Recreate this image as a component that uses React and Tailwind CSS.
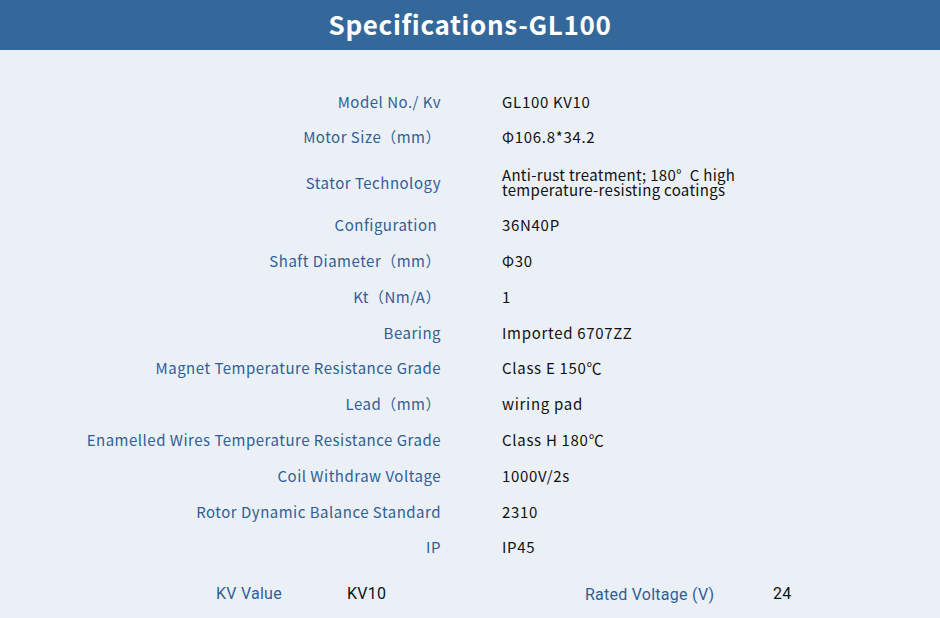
import React from "react";

const specs = [
  { label: "Model No./ Kv", value: "GL100 KV10" },
  { label: "Motor Size（mm）", value: "Φ106.8*34.2" },
  {
    label: "Stator Technology",
    value: ["Anti-rust treatment; 180°\u2002C high", "temperature-resisting coatings"],
  },
  { label: "Configuration ", value: "36N40P" },
  { label: "Shaft Diameter（mm）", value: "Φ30" },
  { label: "Kt（Nm/A）", value: "1" },
  { label: "Bearing", value: "Imported 6707ZZ" },
  { label: "Magnet Temperature Resistance Grade", value: "Class E 150℃" },
  { label: "Lead（mm）", value: "wiring pad" },
  { label: "Enamelled Wires Temperature Resistance Grade", value: "Class H 180℃" },
  { label: "Coil Withdraw Voltage", value: "1000V/2s" },
  { label: "Rotor Dynamic Balance Standard", value: "2310" },
  { label: "IP", value: "IP45" },
];

const jp = "font-['Noto_Sans_CJK_JP',sans-serif]";

export default function App() {
  return (
    <div className="w-[940px] h-[618px] overflow-hidden bg-[#ebf0f6]">
      {/* Header */}
      <div className="h-[50px] bg-[#35689a] flex items-center justify-center pb-[4px]">
        <h1 className={`text-white text-[26px] font-bold tracking-wide ${jp}`}>
          Specifications-GL100
        </h1>
      </div>

      {/* Spec table */}
      <div className={`mt-[34px] ${jp} text-[15px]`}>
        {specs.map((row) => {
          const multi = Array.isArray(row.value);
          return (
            <div
              key={row.label}
              className={`flex items-center ${multi ? "py-[11px]" : "h-[35.8px]"}`}
            >
              <div
                className={`w-[441px] text-right text-[#2f5f96] whitespace-pre tracking-[0.5px] ${multi ? "pt-[4px]" : ""}`}
              >
                {row.label}
              </div>
              <div className="ml-[61px] text-[#111] tracking-[0.7px]">
                {multi ? (
                  <div className="leading-[15px] tracking-[0.3px]">
                    {row.value.map((v) => (
                      <div key={v}>{v}</div>
                    ))}
                  </div>
                ) : (
                  row.value
                )}
              </div>
            </div>
          );
        })}
      </div>

      {/* KV / voltage row */}
      <div className="mt-[10px] flex items-center h-[36px] pl-[216px] font-['Roboto',sans-serif] text-[16px] tracking-[0.25px]">
        <div className="w-[131px] text-[#2f5f96]">KV Value</div>
        <div className="w-[238px] text-[#111]">KV10</div>
        <div className="w-[188px] text-[#2f5f96] pt-[2px]">Rated Voltage (V)</div>
        <div className="text-[#111]">24</div>
      </div>
    </div>
  );
}
